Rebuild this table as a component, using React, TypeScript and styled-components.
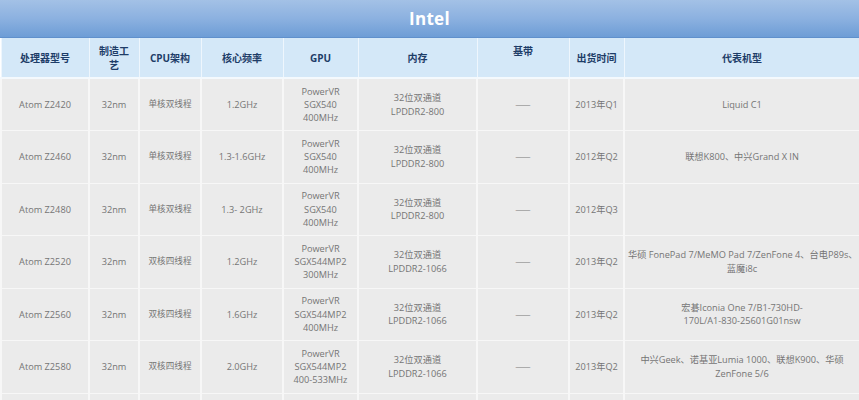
import React from 'react';
import styled, { createGlobalStyle } from 'styled-components';

interface Chip {
  model: string;
  process: string;
  arch: string;
  freq: string;
  gpu: string[];
  memory: string[];
  baseband: string;
  date: string;
  devices: string[];
}

const columns: { label: string[]; width: number; raised?: boolean }[] = [
  { label: ['处理器型号'], width: 88 },
  { label: ['制造工', '艺'], width: 50 },
  { label: ['CPU架构'], width: 62 },
  { label: ['核心频率'], width: 82 },
  { label: ['GPU'], width: 75 },
  { label: ['内存'], width: 119 },
  { label: ['基带'], width: 92, raised: true },
  { label: ['出货时间'], width: 55 },
  { label: ['代表机型'], width: 236 },
];

const chips: Chip[] = [
  {
    model: 'Atom Z2420',
    process: '32nm',
    arch: '单核双线程',
    freq: '1.2GHz',
    gpu: ['PowerVR', 'SGX540', '400MHz'],
    memory: ['32位双通道', 'LPDDR2-800'],
    baseband: '——',
    date: '2013年Q1',
    devices: ['Liquid C1'],
  },
  {
    model: 'Atom Z2460',
    process: '32nm',
    arch: '单核双线程',
    freq: '1.3-1.6GHz',
    gpu: ['PowerVR', 'SGX540', '400MHz'],
    memory: ['32位双通道', 'LPDDR2-800'],
    baseband: '——',
    date: '2012年Q2',
    devices: ['联想K800、中兴Grand X IN'],
  },
  {
    model: 'Atom Z2480',
    process: '32nm',
    arch: '单核双线程',
    freq: '1.3- 2GHz',
    gpu: ['PowerVR', 'SGX540', '400MHz'],
    memory: ['32位双通道', 'LPDDR2-800'],
    baseband: '——',
    date: '2012年Q3',
    devices: [],
  },
  {
    model: 'Atom Z2520',
    process: '32nm',
    arch: '双核四线程',
    freq: '1.2GHz',
    gpu: ['PowerVR', 'SGX544MP2', '300MHz'],
    memory: ['32位双通道', 'LPDDR2-1066'],
    baseband: '——',
    date: '2013年Q2',
    devices: ['华硕 FonePad 7/MeMO Pad 7/ZenFone 4、台电P89s、', '蓝魔i8c'],
  },
  {
    model: 'Atom Z2560',
    process: '32nm',
    arch: '双核四线程',
    freq: '1.6GHz',
    gpu: ['PowerVR', 'SGX544MP2', '400MHz'],
    memory: ['32位双通道', 'LPDDR2-1066'],
    baseband: '——',
    date: '2013年Q2',
    devices: ['宏碁Iconia One 7/B1-730HD-', '170L/A1-830-25601G01nsw'],
  },
  {
    model: 'Atom Z2580',
    process: '32nm',
    arch: '双核四线程',
    freq: '2.0GHz',
    gpu: ['PowerVR', 'SGX544MP2', '400-533MHz'],
    memory: ['32位双通道', 'LPDDR2-1066'],
    baseband: '——',
    date: '2013年Q2',
    devices: ['中兴Geek、诺基亚Lumia 1000、联想K900、华硕', 'ZenFone 5/6'],
  },
];

// the table keeps going below the fold; only its top edge shows
const hiddenRows = 1;

const GlobalStyle = createGlobalStyle`
  body {
    margin: 0;
    background: #ffffff;
    font-family: "Open Sans", "Noto Sans CJK SC", sans-serif;
    overflow: hidden;
  }
`;

const App: React.FC = () => {
  return (
    <>
      <GlobalStyle />
      <StyledWrapper>
        <StyledTitle>Intel</StyledTitle>
        <StyledTable>
          <colgroup>
            {columns.map((c, i) => (
              <col key={i} style={{ width: c.width }} />
            ))}
          </colgroup>
          <thead>
            <tr>
              {columns.map((c, i) => (
                <StyledHeadCell key={i} raised={c.raised}>
                  {c.label.map((l, j) => (
                    <StyledLine key={j}>{l}</StyledLine>
                  ))}
                </StyledHeadCell>
              ))}
            </tr>
          </thead>
          <tbody>
            {chips.map((chip) => (
              <StyledRow key={chip.model}>
                <StyledCell>{chip.model}</StyledCell>
                <StyledCell>{chip.process}</StyledCell>
                <StyledCell small>{chip.arch}</StyledCell>
                <StyledCell>{chip.freq}</StyledCell>
                <StyledCell>
                  {chip.gpu.map((l) => (
                    <StyledLine key={l}>{l}</StyledLine>
                  ))}
                </StyledCell>
                <StyledCell>
                  {chip.memory.map((l) => (
                    <StyledLine key={l}>{l}</StyledLine>
                  ))}
                </StyledCell>
                <StyledCell>
                  <StyledDash>{chip.baseband}</StyledDash>
                </StyledCell>
                <StyledCell>{chip.date}</StyledCell>
                <StyledCell>
                  {chip.devices.map((l) => (
                    <StyledLine key={l}>{l}</StyledLine>
                  ))}
                </StyledCell>
              </StyledRow>
            ))}
            {Array.from({ length: hiddenRows }).map((_, r) => (
              <StyledRow key={`more-${r}`}>
                {columns.map((c, i) => (
                  <StyledCell key={i} />
                ))}
              </StyledRow>
            ))}
          </tbody>
        </StyledTable>
      </StyledWrapper>
    </>
  );
};

const StyledWrapper = styled.div`
  width: 859px;
`;

const StyledTitle = styled.div`
  height: 38px;
  display: flex;
  align-items: center;
  justify-content: center;
  background: linear-gradient(to bottom, #a3c1e6 0%, #8cb1e0 50%, #6d9dd6 100%);
  border-bottom: 1px solid #5f90cc;
  box-sizing: border-box;
  color: #ffffff;
  font-size: 17px;
  font-weight: 700;
  letter-spacing: 0.3px;
`;

const StyledTable = styled.table`
  width: 859px;
  table-layout: fixed;
  border-collapse: collapse;
`;

const StyledHeadCell = styled.th<{ raised?: boolean }>`
  height: 40px;
  padding: 0 2px;
  box-sizing: border-box;
  background: #d4e8f8;
  border: 1px solid #eef6fd;
  border-top: none;
  border-bottom: 2px solid #f4f9fd;
  color: #1e3d68;
  font-size: 10px;
  font-weight: 700;
  line-height: 14px;
  text-align: center;
  vertical-align: ${(props) => (props.raised ? 'top' : 'middle')};
  padding-top: ${(props) => (props.raised ? '6px' : '0')};
`;

const StyledRow = styled.tr`
  height: 52.5px;
`;

const StyledCell = styled.td<{ small?: boolean }>`
  padding: 0 3px;
  background: #ebebeb;
  border: 2px solid #f7f7f7;
  border-top-width: 1px;
  border-bottom-width: 1px;
  color: #757575;
  font-size: ${(props) => (props.small ? '8.6px' : '9.2px')};
  line-height: 13.3px;
  text-align: center;
  vertical-align: middle;
  white-space: nowrap;
`;

const StyledDash = styled.span`
  font-family: "Noto Sans CJK SC", sans-serif;
  color: #7a7a7a;
`;

const StyledLine = styled.div`
  display: block;
`;

export default App;
